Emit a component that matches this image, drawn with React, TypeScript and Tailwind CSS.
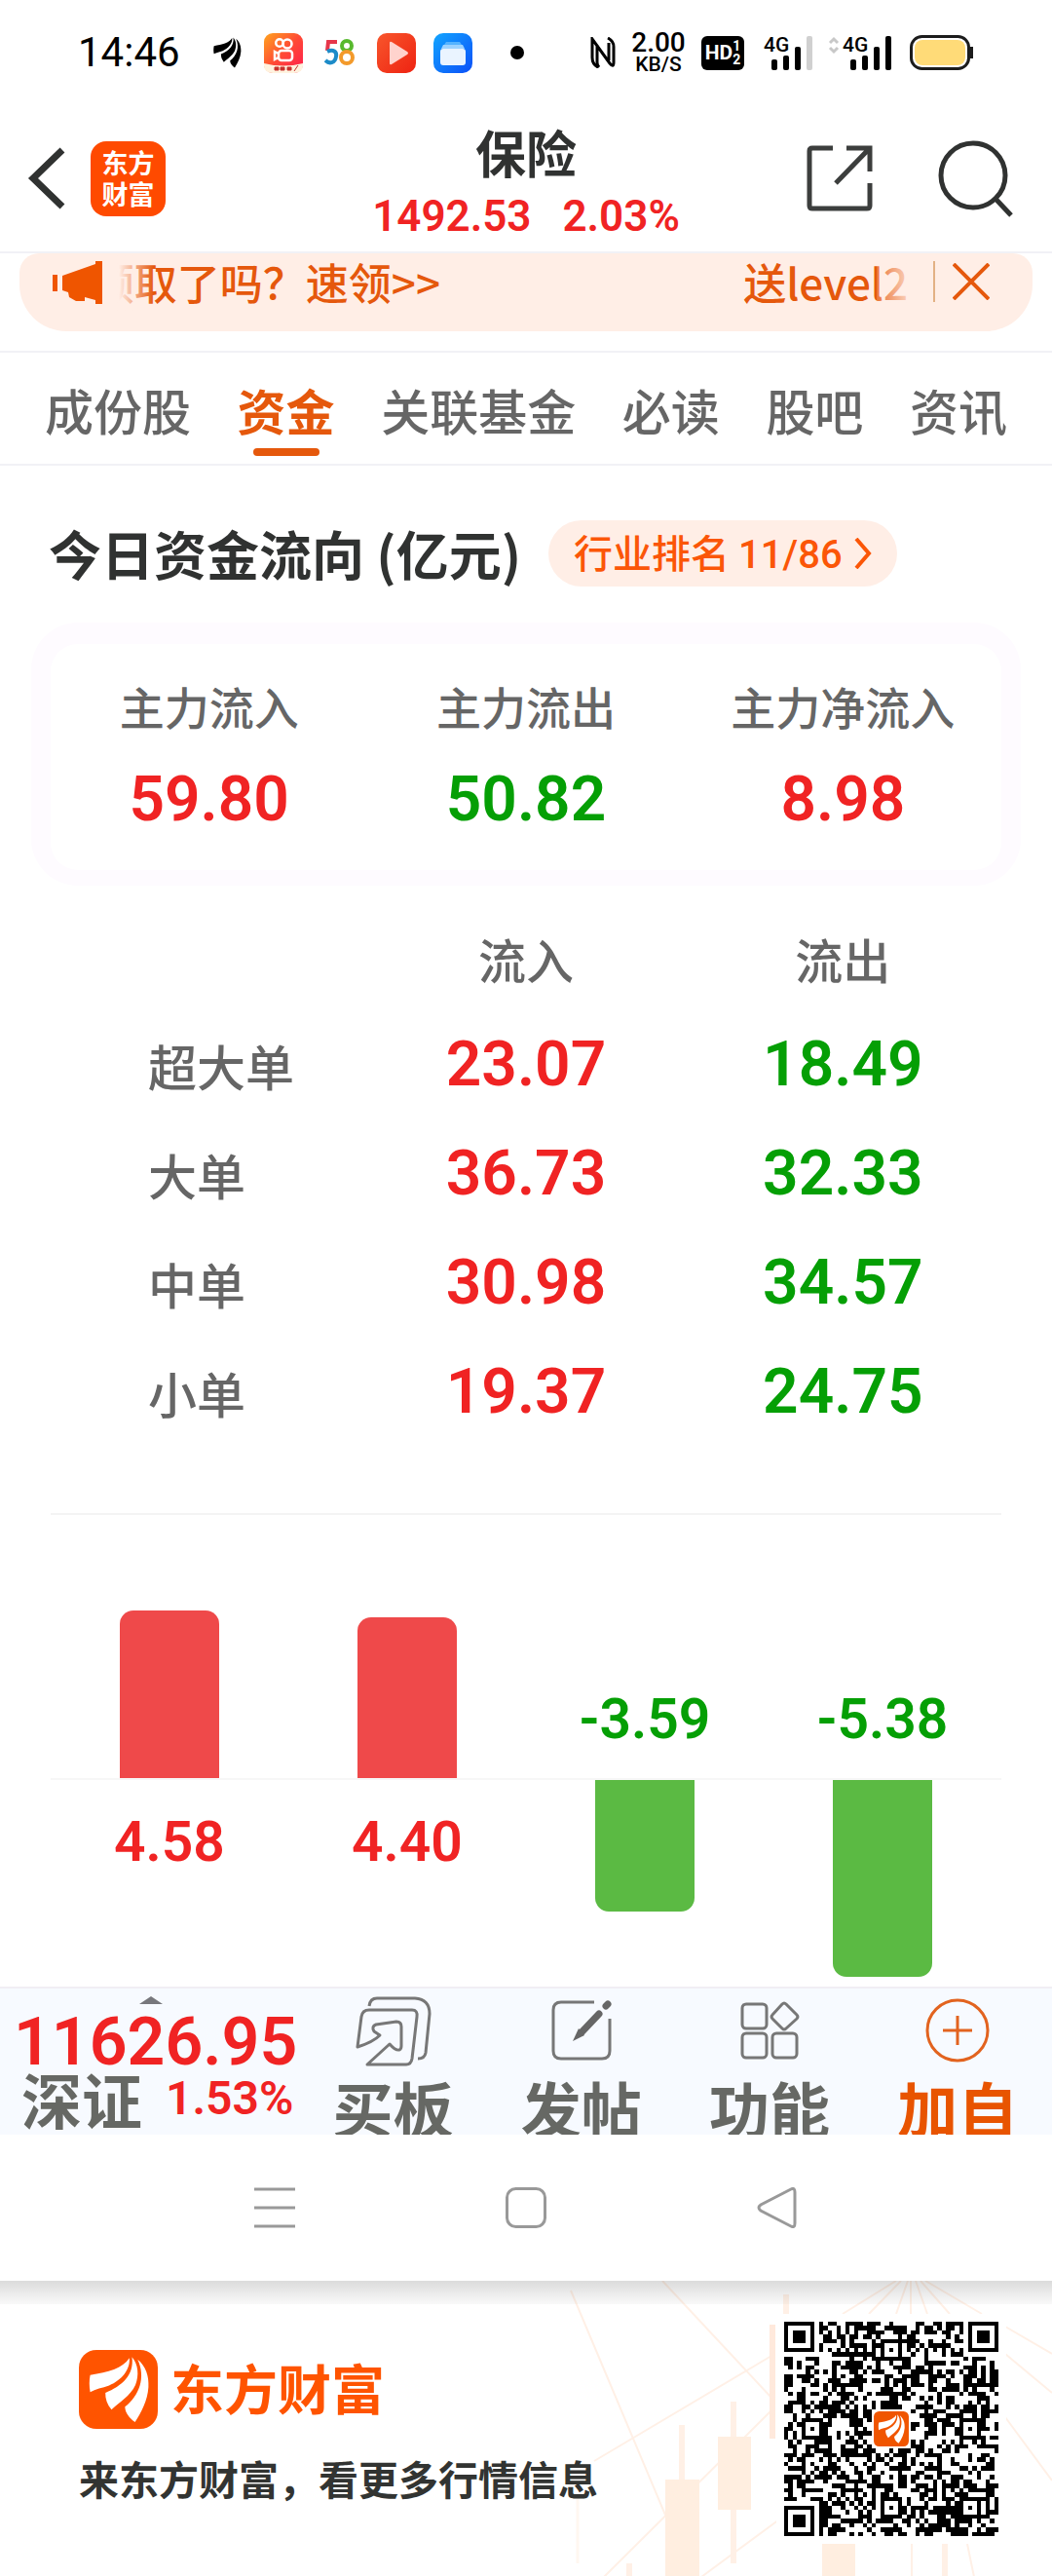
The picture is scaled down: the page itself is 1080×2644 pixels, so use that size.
import React from "react";

const RED = "font-['Roboto'] font-semibold text-[#f02323]";
const GREEN = "font-['Roboto'] font-semibold text-[#059f05]";

function Feathers() {
  return (
    <>
      <path d="M11.6 25.7C30 23 45 19 51.8 8.3C53 20 44 31 31 36.500C24 39 17 40 11.600 43.300C10.500 37 10.500 31 11.600 25.700Z" />
      <path d="M54.500 7.300C61 15 62 26 58 36C53 47 41 54 33.500 61.300C29 56 27 50 27.200 44C44 37 57 26 54.500 7.300Z" />
      <path d="M60.300 9.700C69 17 72 27 71.400 38C70.500 52 64 64 57.600 74C52 70 47.500 65 47.300 58.300C62 47 69 28 60.300 9.700Z" />
    </>
  );
}

const SIZE = 49;

/* Draws a 7x7 finder or a 5x5 alignment square; null when the cell is outside it. */
function square(x: number, y: number, cx: number, cy: number, r: number): boolean | null {
  const d = Math.max(Math.abs(x - cx), Math.abs(y - cy));
  if (d > r) return null;
  if (r === 4) return d !== 4 && d !== 2;
  return d !== 1;
}

function qrPath() {
  let seed = 20477;
  const next = () => {
    seed = (seed * 1103515245 + 12345) % 2147483648;
    return seed / 2147483648;
  };
  let d = "";
  for (let y = 0; y < SIZE; y++) {
    for (let x = 0; x < SIZE; x++) {
      let on = next() > 0.49;
      if (y === 6 || x === 6) on = (x + y) % 2 === 0;
      const marks = [
        square(x, y, 3, 3, 4), square(x, y, 45, 3, 4), square(x, y, 3, 45, 4),
        square(x, y, 24, 6, 2), square(x, y, 6, 24, 2), square(x, y, 42, 24, 2),
        square(x, y, 24, 42, 2), square(x, y, 42, 42, 2),
      ];
      for (const m of marks) if (m !== null) on = m;
      if (Math.abs(x - 24) < 5 && Math.abs(y - 24) < 5) on = false;
      if (on) d += `M${x} ${y}h1v1h-1z`;
    }
  }
  return d;
}

function QrCode() {
  return (
    <svg viewBox="0 0 49 49" className="size-[220px]" shapeRendering="crispEdges" role="img" aria-label="二维码">
      <path d={qrPath()} fill="#000" />
      <rect x="20.5" y="20.5" width="8" height="8" rx="1.200" fill="#f05500" shapeRendering="auto" />
      <g transform="translate(20.500 20.500) scale(.0988)" fill="#fff" shapeRendering="auto"><Feathers /></g>
    </svg>
  );
}

function Signal({ weak }: { weak?: boolean }) {
  return (
    <div className="relative h-9 w-[52px]">
      <span className="absolute left-0 top-0 font-['Roboto'] text-[21px] leading-5 font-medium">4G</span>
      <svg viewBox="0 0 52 36" className="h-9 w-[52px]" aria-hidden="true">
        <rect x="8" y="25" width="6" height="11" rx="2" />
        <rect x="20" y="21" width="6" height="15" rx="2" />
        <rect x="32" y="12" width="6" height="24" rx="2" />
        <rect x="44" y="1" width="6" height="35" rx="2" fill={weak ? "#d0d0d0" : "#000"} />
      </svg>
    </div>
  );
}

function StatusBar() {
  return (
    <div className="flex h-[108px] items-center justify-between pl-20 pr-[80px] text-black">
      <div className="flex items-center">
        <span className="w-[138px] font-['Roboto'] text-[42px] leading-none">14:46</span>
        <svg viewBox="10 6 63 69" className="mr-[22px] h-8 w-[31px]" aria-hidden="true"><Feathers /></svg>
        <svg viewBox="0 0 40 41" className="mr-[22px] h-[41px] w-10" aria-hidden="true">
          <defs>
            <linearGradient id="ks" x1="0" y1="0" x2="1" y2="1"><stop offset="0" stopColor="#ffa51f" /><stop offset=".5" stopColor="#ff4a35" /><stop offset="1" stopColor="#ff1c50" /></linearGradient>
          </defs>
          <rect width="40" height="41" rx="9" fill="url(#ks)" />
          <path d="M0 31Q20 36 40 31V34Q39 41 31 41H9Q1 41 0 34Z" fill="#fff3df" />
          <g fill="none" stroke="#fff" strokeWidth="2.500">
            <circle cx="16" cy="10" r="3.800" /><circle cx="24" cy="11" r="4.500" />
            <rect x="15" y="18" width="14" height="10" rx="3" /><path d="M15 21L11 19V27L15 25" />
          </g>
          <path d="M11 35h4v3h-4zM17 35h4v3h-4zM24 35h4v3h-4zM31 39l4-6" fill="#c8322c" stroke="#c8322c" />
        </svg>
        <svg viewBox="0 0 32 28" className="mr-[22px] h-7 w-8" fill="none" strokeWidth="4" aria-hidden="true">
          <path d="M13 3H4L3 12" stroke="#e6364a" />
          <path d="M3 13C9 10 13 13 12 18C11 25 5 26 1 22" stroke="#1c8bc8" />
          <circle cx="23" cy="7" r="5" stroke="#58b92e" /><circle cx="23" cy="19" r="6" stroke="#f39a2b" />
        </svg>
        <svg viewBox="0 0 40 41" className="mr-[18px] h-[41px] w-10" aria-hidden="true">
          <defs><linearGradient id="pl" x1="0" y1="0" x2="1" y2="1"><stop offset="0" stopColor="#f8562c" /><stop offset="1" stopColor="#ee2312" /></linearGradient></defs>
          <rect width="40" height="41" rx="10" fill="url(#pl)" />
          <path d="M13 10Q13 8 15 9L31 19Q33 20.500 31 22L15 32Q13 33 13 31Z" fill="#ffd3cd" />
        </svg>
        <svg viewBox="0 0 40 41" className="h-[41px] w-10" aria-hidden="true">
          <defs><linearGradient id="bl" x1="0" y1="0" x2="1" y2="1"><stop offset="0" stopColor="#13a5ff" /><stop offset="1" stopColor="#0b50f8" /></linearGradient></defs>
          <rect width="40" height="41" rx="10" fill="url(#bl)" />
          <path d="M13 9h14l2 3H11z" fill="#55b3ff" /><path d="M10 12h20l2 4H8z" fill="#9cd2ff" />
          <rect x="7" y="16" width="26" height="17" rx="3" fill="#eaf4ff" />
        </svg>
        <span className="ml-[39px] size-[14px] rounded-full bg-black" />
      </div>
      <div className="flex items-center">
        <svg viewBox="0 0 26 32" className="mr-[14px] h-8 w-[26px]" fill="none" stroke="#000" strokeWidth="3" aria-hidden="true">
          <path d="M8 31Q2 28 2 21V2L20 27Q24 32 24 26V10Q24 4 18 1M7 8V26Q7 29 9 31M19 24V6" />
        </svg>
        <div className="mr-[14px] flex w-[60px] flex-col items-center text-center font-['Roboto'] font-medium">
          <span className="text-[28px] leading-6">2.00</span>
          <span className="text-[21px] leading-5">KB/S</span>
        </div>
        <div className="mr-[20px] flex h-[35px] w-[44px] items-center justify-center rounded-md bg-black font-['Roboto'] text-white">
          <span className="text-[21px] leading-none font-bold">HD</span>
          <span className="flex flex-col text-[14px] leading-[14px] font-bold"><span>1</span><span>2</span></span>
        </div>
        <Signal weak />
        <svg viewBox="0 0 12 36" className="ml-[14px] mr-[3px] h-9 w-3" fill="none" stroke="#c8c8c8" strokeWidth="3" aria-hidden="true"><path d="M2 8L6 4L10 8M2 13L6 17L10 13" /></svg>
        <Signal />
        <svg viewBox="0 0 66 36" className="ml-[17px] h-9 w-[66px]" aria-hidden="true">
          <rect x="1.500" y="1.500" width="59" height="33" rx="11" fill="#fff" stroke="#1c1c1c" strokeWidth="3" />
          <rect x="5" y="5" width="52" height="26" rx="8" fill="#ffdb78" />
          <path d="M62 12H65V24H62Z" fill="#1c1c1c" />
        </svg>
      </div>
    </div>
  );
}

function Header() {
  return (
    <header className="relative flex h-[152px] items-center justify-between border-b-2 border-[#f1f1f6] pl-[28px] pr-[38px]">
      <div className="flex items-center gap-[25px]">
        <button aria-label="返回">
          <svg viewBox="0 0 40 66" className="h-[66px] w-10" fill="none" stroke="#303231" strokeWidth="7" aria-hidden="true"><path d="M36 4L6 33L36 62" /></svg>
        </button>
        <a href="#home" className="flex size-[77px] flex-col items-center justify-center rounded-2xl bg-[#ff4a00] text-[27px] leading-8 font-bold text-white">
          <span>东方</span><span>财富</span>
        </a>
      </div>
      <div className="absolute inset-x-60 top-4 flex flex-col items-center">
        <h1 className="text-[52px] leading-[64px] font-bold text-[#303231]">保险</h1>
        <p className={`flex gap-8 pt-[2px] text-[44px] leading-[64px] ${RED}`}><span>1492.53</span><span>2.03%</span></p>
      </div>
      <div className="flex items-center gap-[66px]">
        <button aria-label="分享">
          <svg viewBox="0 0 68 68" className="size-[68px]" fill="none" stroke="#3c3e3d" strokeWidth="5" aria-hidden="true">
            <path d="M27 3H6Q3 3 3 6V62Q3 65 6 65H62Q65 65 65 62V39M41 3H65V27M64 4L30 39" />
          </svg>
        </button>
        <button aria-label="搜索">
          <svg viewBox="0 0 80 80" className="size-20" fill="none" stroke="#303231" strokeWidth="5" aria-hidden="true">
            <circle cx="37" cy="37" r="33" /><path d="M60 61L76 78" />
          </svg>
        </button>
      </div>
    </header>
  );
}

function Banner() {
  return (
    <div className="mx-5 flex h-[80px] items-start justify-between rounded-b-[48px] rounded-t-[20px] bg-[#ffeee6] pb-5 pl-[34px] pr-[44px] text-[44px] leading-[58px] font-medium text-[#e5580c]">
      <div className="flex items-center">
        <svg viewBox="0 0 52 46" className="h-[46px] w-[52px]" fill="#ef5500" aria-hidden="true">
          <path d="M0 15H5V32H0ZM10 16L44 4V1H51V45H44V41L33 38V42H24L17 38L16 33L10 31Z" />
        </svg>
        <span className="relative ml-3 flex h-[60px] w-[334px] justify-end overflow-hidden whitespace-nowrap">
          <span>领取了吗？速领&gt;&gt;</span>
          <span className="absolute left-0 top-0 h-full w-10 bg-gradient-to-r from-[#ffeee6] from-10% to-transparent" />
        </span>
      </div>
      <div className="flex items-center">
        <span className="relative">送level2<span className="absolute right-0 top-0 h-full w-8 bg-gradient-to-l from-[#ffeee6cc] to-[#ffeee633]" /></span>
        <span className="ml-[26px] mr-[18px] h-[42px] w-[2px] bg-[#e2b184]" />
        <button aria-label="关闭">
          <svg viewBox="0 0 38 38" className="block size-[38px]" stroke="#e5580c" strokeWidth="4" aria-hidden="true"><path d="M1 1L37 37M37 1L1 37" /></svg>
        </button>
      </div>
    </div>
  );
}

function Tabs() {
  const tabs = ["成份股", "资金", "关联基金", "必读", "股吧", "资讯"];
  return (
    <nav className="mt-5 flex h-[118px] items-start justify-between border-y-2 border-[#f1f1f6] px-[46px] pt-5">
      {tabs.map((t) => (
        <a
          key={t}
          href={`#${t}`}
          className={t === "资金"
            ? "flex flex-col items-center text-[50px] leading-[76px] font-bold text-[#e5580c]"
            : "text-[50px] leading-[76px] font-medium text-[#666]"}
        >
          {t}
          {t === "资金" && <span className="mt-[2px] h-2 w-[68px] rounded-full bg-[#e5580c]" />}
        </a>
      ))}
    </nav>
  );
}

const summary = [
  { label: "主力流入", value: "59.80", up: true },
  { label: "主力流出", value: "50.82", up: false },
  { label: "主力净流入", value: "8.98", up: true },
];

const orders = [
  ["超大单", "23.07", "18.49"],
  ["大单", "36.73", "32.33"],
  ["中单", "30.98", "34.57"],
  ["小单", "19.37", "24.75"],
];

const flows = [4.58, 4.4, -3.59, -5.38];
const SCALE = 37.6;

function Flow() {
  return (
    <main>
      <div className="mt-[55px] flex h-[70px] items-center gap-7 px-[50px]">
        <h2 className="text-[54px] leading-[70px] font-bold text-[#303231]">今日资金流向 (亿元)</h2>
        <a href="#rank" className="flex h-[68px] items-center gap-3 rounded-full bg-[#ffeee6] px-[26px] text-[40px] leading-[60px] font-medium text-[#fb5607]">
          <span>行业排名 <span className="font-['Roboto']">11/86</span></span>
          <svg viewBox="0 0 18 32" className="h-8 w-[18px]" fill="none" stroke="#fb5607" strokeWidth="4" aria-hidden="true"><path d="M2 1L15 16L2 31" /></svg>
        </a>
      </div>
      <section className="mx-8 mt-[36px] rounded-[48px] bg-[#fefbff] px-5 pb-4 pt-[22px]">
        <dl className="grid grid-cols-3 rounded-[28px] bg-white pb-[30px] pt-7 text-center">
          {summary.map((s) => (
            <div key={s.label}>
              <dt className="text-[46px] leading-[70px] font-medium text-[#666]">{s.label}</dt>
              <dd className={`mt-5 text-[64px] leading-[84px] ${s.up ? RED : GREEN}`}>{s.value}</dd>
            </div>
          ))}
        </dl>
      </section>
      <table className="mx-[52px] mt-[26px] w-[calc(100%-104px)] table-fixed">
        <thead>
          <tr className="h-[98px] text-[49px] text-[#666]">
            <td /><th className="font-medium">流入</th><th className="font-medium">流出</th>
          </tr>
        </thead>
        <tbody>
          {orders.map(([name, inn, out]) => (
            <tr key={name} className="h-28 text-center text-[64px] leading-[84px]">
              <th className="pl-[100px] pt-2 text-left text-[50px] font-medium text-[#666]">{name}</th>
              <td className={`pt-2 ${RED}`}>{inn}</td>
              <td className={`pt-2 ${GREEN}`}>{out}</td>
            </tr>
          ))}
        </tbody>
      </table>
      <div className="mx-[52px] mt-[72px] grid h-[486px] grid-cols-4 border-t-2 border-[#f4f4f4] text-[57px] leading-[76px]">
        {flows.map((v) => (
          <div key={v} className="flex flex-col items-center">
            <div className="flex h-[272px] w-full flex-col items-center justify-end border-b-2 border-[#f7f7f7]">
              {v > 0
                ? <div className="w-[102px] rounded-t-[14px] bg-[#ef494a]" style={{ height: Math.round(v * SCALE) }} />
                : <span className={`mb-[22px] ${GREEN}`}>{v.toFixed(2)}</span>}
            </div>
            {v > 0
              ? <span className={`mt-[26px] ${RED}`}>{v.toFixed(2)}</span>
              : <div className="w-[102px] rounded-b-[14px] bg-[#5bba43]" style={{ height: Math.round(-v * SCALE) }} />}
          </div>
        ))}
      </div>
    </main>
  );
}

function ActionBar() {
  const item = "flex flex-1 flex-col items-center text-[62px] leading-[84px] font-bold text-[#666864]";
  const icon = "mt-2 h-[72px] w-20 shrink-0";
  return (
    <div className="flex h-[152px] overflow-hidden border-t-2 border-[#f0eef4] bg-[#f7faff]">
      <a href="#index" className="relative w-[307px] shrink-0 pl-[14px] pt-[22px]">
        <svg viewBox="0 0 24 8" className="absolute left-[143px] top-2 h-2 w-6" fill="#77777c" aria-hidden="true"><path d="M0 8L12 0L24 8Z" /></svg>
        <span className={`block text-[68px] leading-[66px] ${RED}`}>11626.95</span>
        <span className="flex items-center gap-6 pl-2 leading-[50px] whitespace-nowrap">
          <span className="text-[62px] font-bold text-[#666864]">深证</span>
          <span className={`text-[48px] ${RED}`}>1.53%</span>
        </span>
      </a>
      <div className="flex flex-1">
        <button className={item}>
          <svg viewBox="0 0 80 72" className={icon} fill="none" stroke="#777" strokeWidth="3" strokeLinejoin="round" aria-hidden="true">
            <path d="M15 10Q16 2 23 2H62Q77 3 77 18L73 58Q72 64 65 64" />
            <path d="M3 52L7 21Q8 14 15 14H59Q65 14 64 21L59 64Q58 70 53 70H13L36 49Q42 56 46 55Q48 54 48 51V31Q48 26 43 26L22 29Q17 31 20 36L26 40Q19 47 3 52Z" />
          </svg>
          <span>买板</span>
        </button>
        <button className={item}>
          <svg viewBox="0 0 80 72" className={icon} fill="none" stroke="#777" strokeWidth="3" aria-hidden="true">
            <path d="M53 6H19Q11 6 11 14V56Q11 64 19 64H61Q69 64 69 56V23" />
            <path d="M67 8L65 10M58 18L40 37" strokeWidth="7" strokeLinecap="round" stroke="#666" /><path d="M37 33L31 46L43 40Z" fill="#666" stroke="none" />
          </svg>
          <span>发帖</span>
        </button>
        <button className={item}>
          <svg viewBox="0 0 80 72" className={icon} fill="none" stroke="#777" strokeWidth="3" aria-hidden="true">
            <rect x="12" y="8" width="25" height="25" rx="4" /><rect x="12" y="38" width="25" height="25" rx="4" /><rect x="43" y="38" width="25" height="25" rx="4" />
            <path d="M53 8Q55 6 57 8L68 19Q70 21 68 23L57 33Q55 35 53 33L43 23Q41 21 43 19Z" />
          </svg>
          <span>功能</span>
        </button>
        <button className="flex flex-1 flex-col items-center text-[62px] leading-[84px] font-bold text-[#e85400]">
          <svg viewBox="0 0 80 72" className={icon} fill="none" stroke="#e2631f" strokeWidth="3" aria-hidden="true">
            <circle cx="40" cy="35" r="31" /><path d="M25 35H55M40 20V50" />
          </svg>
          <span>加自</span>
        </button>
      </div>
    </div>
  );
}

function SystemNav() {
  return (
    <div className="flex h-[150px] items-center justify-center gap-[216px] bg-white">
      <button aria-label="菜单"><svg viewBox="0 0 42 42" className="block size-[42px]" stroke="#999" strokeWidth="3" aria-hidden="true"><path d="M0 2H42M0 21H42M0 40H42" /></svg></button>
      <button aria-label="主页"><svg viewBox="0 0 42 42" className="block size-[42px]" fill="none" stroke="#999" strokeWidth="3" aria-hidden="true"><rect x="1.500" y="1.500" width="39" height="39" rx="9" /></svg></button>
      <button aria-label="后退"><svg viewBox="0 0 42 42" className="block size-[42px]" fill="none" stroke="#999" strokeWidth="3" aria-hidden="true"><path d="M35 2Q39 0 39 5V37Q39 42 35 40L4 24Q0 21 4 18Z" /></svg></button>
    </div>
  );
}

function Footer() {
  return (
    <footer className="relative flex h-[304px] justify-between overflow-hidden bg-white pl-[81px] pr-[55px]">
      <svg viewBox="0 0 520 304" className="absolute right-0 top-0 h-[304px] w-[520px]" fill="none" stroke="#fff0e6" strokeWidth="3" aria-hidden="true">
        <path d="M26 10L125 245M120 0L232 120M50 185L232 77M60 304L232 133M160 304L240 245" strokeWidth="2" />
        <path d="M360 0L305 34M365 0L332 34M372 0L360 34M375 0V34M380 0L392 34M385 0L415 34M390 0L448 34M472 47L520 75M472 75L520 115M472 140L520 205M376 270V304M433 270L440 304" strokeWidth="2" />
        <path d="M140 148V205M193 124V290M247 14V40M410 270V304M86 290V304" strokeWidth="6" />
        <path d="M233 45V162" strokeWidth="6" stroke="#ffe9dc" />
        <path d="M33 220V290" stroke="#fff7f0" />
        <path d="M123 204H158V304H123ZM177 160H211V235H177ZM284 270H318V304H284Z" fill="#ffeee0" stroke="none" />
      </svg>
      <div className="absolute inset-x-0 top-0 h-6 bg-gradient-to-b from-[#00000024] to-[#00000006]" />
      <div className="relative pt-[71px]">
        <a href="#app" className="flex items-center gap-[13px]">
          <svg viewBox="0 0 81 81" className="size-[81px]" aria-hidden="true"><rect width="81" height="81" rx="18" fill="#ff5400" /><g fill="#fff"><Feathers /></g></svg>
          <span className="pb-2 text-[55px] leading-[72px] font-bold text-[#ff5400]">东方财富</span>
        </a>
        <p className="mt-5 text-[41px] leading-[60px] font-bold text-[#323432]">来东方财富，看更多行情信息</p>
      </div>
      <div className="relative -mr-2 mt-[34px] h-[236px] bg-white px-2 pt-2"><QrCode /></div>
    </footer>
  );
}

export default function App() {
  return (
    <div className="w-full bg-white font-['Noto_Sans_CJK_SC',sans-serif]">
      <StatusBar />
      <Header />
      <Banner />
      <Tabs />
      <Flow />
      <ActionBar />
      <SystemNav />
      <Footer />
    </div>
  );
}
